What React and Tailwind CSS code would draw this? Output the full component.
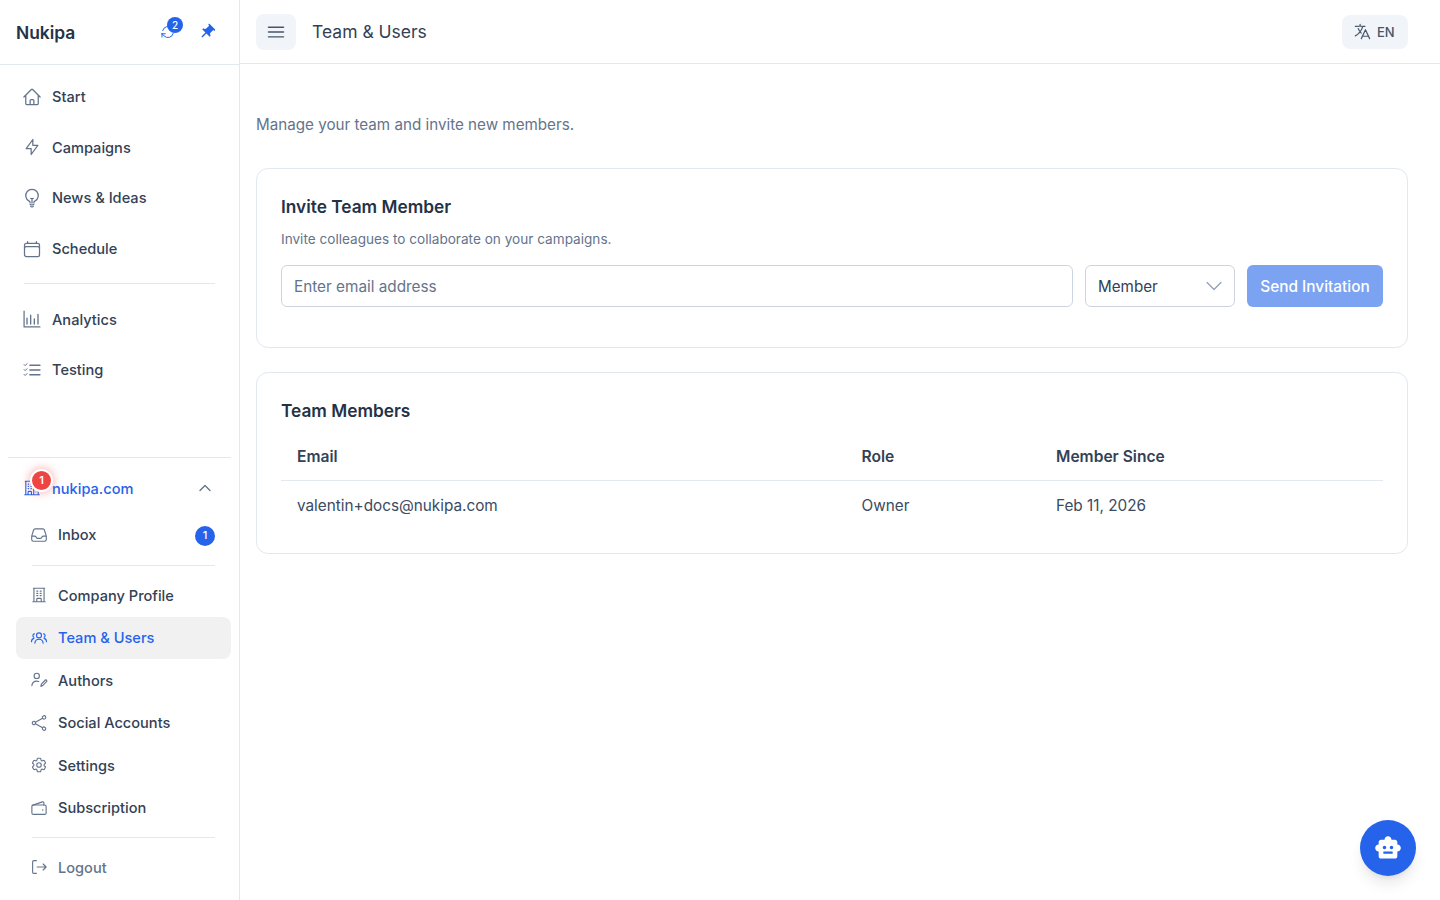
import React from "react";
import {
  HiOutlineHome, HiOutlineLightBulb, HiOutlineCalendar,
  HiOutlineBuildingOffice2, HiOutlineInbox, HiOutlineBuildingOffice,
  HiOutlineShare, HiOutlineCog6Tooth,
  HiOutlineLanguage, HiOutlineBars3, HiOutlineChevronUp, HiOutlineChevronDown,
  HiOutlineArrowPath,
} from "react-icons/hi2";
import { MdSmartToy, MdPushPin } from "react-icons/md";

const Stroke = ({ className, width = 1.5, children }) => (
  <svg viewBox="0 0 24 24" fill="none" stroke="currentColor" strokeWidth={width} strokeLinecap="round" strokeLinejoin="round" className={className}>
    {children}
  </svg>
);

const BoltIcon = ({ className }) => (
  <Stroke className={className}>
    <path d="M13 3v7h6l-8 11v-7H5l8-11z" />
  </Stroke>
);

const AnalyticsIcon = ({ className }) => (
  <Stroke className={className}>
    <path d="M2.500 2.500v19h19" />
    <path d="M6 11v7M10.400 7.500v10.500M14.800 12v6M19.200 6.600v11.400" strokeWidth="1.600" />
  </Stroke>
);

const TestingIcon = ({ className }) => (
  <Stroke className={className}>
    <path d="M9.500 6.400h12M9.500 12h12M9.500 17.600h12" strokeWidth="1.800" />
    <path d="M2.500 5.500l1.300 1.300 2.200-2.300M2.500 11.500l1.300 1.300 2.200-2.300M2.500 17.300l1.300 1.300 2.200-2.300" strokeWidth="1.200" />
  </Stroke>
);

const TeamIcon = ({ className }) => (
  <Stroke className={className}>
    <circle cx="12" cy="8.500" r="3.300" />
    <path d="M6.500 19c.2-3.400 2.500-5.300 5.500-5.300s5.300 1.900 5.500 5.300" />
    <path d="M6 6.500a2.300 2.300 0 0 0-.8 4.400M2 17c0-2.600 1.200-4 3.200-4.500" />
    <path d="M18 6.500a2.300 2.300 0 0 1 .8 4.400M22 17c0-2.600-1.200-4-3.200-4.500" />
  </Stroke>
);

const AuthorsIcon = ({ className }) => (
  <Stroke className={className}>
    <circle cx="9" cy="6.500" r="3.500" />
    <path d="M2.500 19.500c.5-4 3-6 6.500-6 1 0 1.900.2 2.700.5" />
    <path d="M14.500 20.500l.6-3 5.400-5.500c.8-.8 2.600 1 1.800 1.800l-5.400 5.600-2.400 1.100z" />
  </Stroke>
);

const WalletIcon = ({ className }) => (
  <Stroke className={className}>
    <rect x="2.500" y="8" width="19" height="12.500" rx="2" />
    <path d="M3 8.500L16.500 3.800c1-.3 2 .4 2 1.500V8" />
    <path d="M17 14.500h.01" strokeWidth="2" />
  </Stroke>
);

const LogoutIcon = ({ className }) => (
  <Stroke className={className}>
    <path d="M8.500 3.500H5a1.500 1.500 0 0 0-1.500 1.500v14A1.500 1.500 0 0 0 5 20.500h3.500" />
    <path d="M9.500 12h12M17.500 8l4 4-4 4" />
  </Stroke>
);

const MainNavItem = ({ icon: Icon, label }) => (
  <a className="flex h-[50.67px] items-center gap-[10px] pl-[6px] text-[14.6px] font-medium text-[#334155]">
    <Icon className="h-5 w-5 shrink-0 text-[#64748b]" />
    <span className="pt-0.5">{label}</span>
  </a>
);

const SubNavItem = ({ icon: Icon, label, active }) => (
  <a className={`flex h-[42.5px] items-center gap-[10px] rounded-lg pl-[14px] text-[14.6px] font-medium ${active ? "bg-[#f1f1f1] text-[#2563eb]" : "text-[#334155]"}`}>
    <Icon className={`h-[18px] w-[18px] shrink-0 ${active ? "text-[#2563eb]" : "text-[#64748b]"}`} />
    <span className="pt-[3px]">{label}</span>
  </a>
);

const Sidebar = () => (
  <aside className="flex h-screen w-[240px] shrink-0 flex-col border-r border-[#e2e8f0] bg-white">
    <div className="flex h-[65px] shrink-0 items-center justify-between border-b border-[#e2e8f0] pl-4 pr-[23px]">
      <span className="pt-[3px] text-[17.4px] font-semibold text-[#243247]">Nukipa</span>
      <div className="flex items-center gap-[22px]">
        <div className="relative">
          <HiOutlineArrowPath className="h-4 w-4 text-[#2563eb]" />
          <span className="absolute -right-[7px] -top-[7px] flex h-4 w-4 items-center justify-center rounded-full bg-[#2563eb] text-[10px] font-medium text-white">2</span>
        </div>
        <MdPushPin className="h-[18px] w-[18px] rotate-45 text-[#2563eb]" />
      </div>
    </div>

    <nav className="flex flex-1 flex-col pl-4 pr-6 pt-[6.5px]">
      <MainNavItem icon={HiOutlineHome} label="Start" />
      <MainNavItem icon={BoltIcon} label="Campaigns" />
      <MainNavItem icon={HiOutlineLightBulb} label="News & Ideas" />
      <MainNavItem icon={HiOutlineCalendar} label="Schedule" />
      <div className="mb-[10px] ml-2 mt-[9px] h-px bg-[#e2e8f0]" />
      <MainNavItem icon={AnalyticsIcon} label="Analytics" />
      <MainNavItem icon={TestingIcon} label="Testing" />
    </nav>

    <div className="mx-2 flex flex-col border-t border-[#e2e8f0] pb-3 pl-2">
      <div className="relative flex h-[60px] items-center justify-between pl-[7px] pr-[18px] text-[14.6px] font-medium text-[#2563eb]">
        <div className="flex items-center gap-[11px]">
          <HiOutlineBuildingOffice2 className="h-[18px] w-[18px]" />
          <span className="pt-[3px]">nukipa.com</span>
        </div>
        <HiOutlineChevronUp className="h-4 w-4 text-[#64748b]" strokeWidth={2} />
        <span className="absolute left-[14px] top-[11px] flex h-[23px] w-[23px] items-center justify-center rounded-full border-2 border-white bg-[#ef4444] text-[11px] font-semibold text-white shadow-[0_0_10px_rgba(239,68,68,0.5)]">1</span>
      </div>
      <a className="flex h-[35px] items-center justify-between pl-[14px] pr-4 text-[14.6px] font-medium text-[#334155]">
        <span className="flex items-center gap-[10px]">
          <HiOutlineInbox className="h-[18px] w-[18px] text-[#64748b]" />
          <span>Inbox</span>
        </span>
        <span className="flex h-5 w-5 items-center justify-center rounded-full bg-[#2563eb] text-[11px] font-medium text-white">1</span>
      </a>
      <div className="mx-4 mb-2 mt-3 h-px bg-[#e2e8f0]" />
      <SubNavItem icon={HiOutlineBuildingOffice} label="Company Profile" />
      <SubNavItem icon={TeamIcon} label="Team & Users" active />
      <SubNavItem icon={AuthorsIcon} label="Authors" />
      <SubNavItem icon={HiOutlineShare} label="Social Accounts" />
      <SubNavItem icon={HiOutlineCog6Tooth} label="Settings" />
      <SubNavItem icon={WalletIcon} label="Subscription" />
      <div className="mx-4 my-2 h-px bg-[#e2e8f0]" />
      <a className="flex h-[42px] items-center gap-[10px] pl-[14px] text-[14.6px] font-medium text-[#64748b]">
        <LogoutIcon className="h-[18px] w-[18px]" />
        <span className="pt-[3px]">Logout</span>
      </a>
    </div>
  </aside>
);

const Header = () => (
  <header className="flex h-[64px] shrink-0 items-center justify-between border-b border-[#e2e8f0] pl-4 pr-8">
    <div className="flex items-center gap-4">
      <button className="flex h-9 w-10 items-center justify-center rounded-lg bg-[#f1f5f9] text-[#475569]">
        <HiOutlineBars3 className="h-[22px] w-[22px]" />
      </button>
      <h1 className="pt-0.5 text-[17.5px] text-[#334155]">Team & Users</h1>
    </div>
    <button className="flex h-[34px] w-[66px] items-center gap-[5px] rounded-lg bg-[#f1f5f9] pl-[11px] text-[13px] font-medium text-[#475569]">
      <HiOutlineLanguage className="h-[19px] w-[19px]" />
      <span className="pt-[2px]">EN</span>
    </button>
  </header>
);

const InviteCard = () => (
  <section className="h-[180px] rounded-xl border border-[#e2e8f0] bg-white px-6 pt-6">
    <h2 className="text-[17.3px] font-semibold leading-7 text-[#243247]">Invite Team Member</h2>
    <p className="mt-2 text-[13.6px] leading-5 text-[#64748b]">Invite colleagues to collaborate on your campaigns.</p>
    <div className="mt-4 flex gap-3">
      <input
        placeholder="Enter email address"
        className="h-[42px] flex-1 rounded-md border border-[#cbd5e1] px-3 text-[15.3px] text-[#334155] placeholder:text-[#64748b]"
      />
      <div className="flex h-[42px] w-[150px] items-center justify-between rounded-md border border-[#cbd5e1] pl-3 pr-[9px] text-[15.2px] text-[#334155]">
        <span className="pt-0.5">Member</span>
        <HiOutlineChevronDown className="h-[22px] w-[22px] text-[#94a3b8]" />
      </div>
      <button className="h-[42px] w-[136px] rounded-md bg-[#7ca2f2] pt-0.5 text-[15.4px] font-medium text-white">Send Invitation</button>
    </div>
  </section>
);

const MembersCard = () => (
  <section className="mt-6 h-[182px] rounded-xl border border-[#e2e8f0] bg-white px-6 pt-6">
    <h2 className="text-[17.3px] font-semibold leading-7 text-[#243247]">Team Members</h2>
    <table className="mt-2 w-full text-left text-[15.3px] text-[#3b4a60]">
      <thead>
        <tr className="h-[47px] border-b border-[#e2e8f0] text-[15.6px]">
          <th className="w-[564.5px] px-4 font-semibold text-[#334155]">Email</th>
          <th className="w-[194.5px] px-4 font-semibold text-[#334155]">Role</th>
          <th className="px-4 font-semibold text-[#334155]">Member Since</th>
        </tr>
      </thead>
      <tbody>
        <tr className="h-[49px]">
          <td className="px-4 pt-[3px]">valentin+docs@nukipa.com</td>
          <td className="px-4 pt-[3px]">Owner</td>
          <td className="px-4 pt-[3px]">Feb 11, 2026</td>
        </tr>
      </tbody>
    </table>
  </section>
);

export default function App() {
  return (
    <div className="relative flex h-screen overflow-hidden bg-white font-['Inter',sans-serif]">
      <Sidebar />
      <div className="flex min-w-0 flex-1 flex-col">
        <Header />
        <main className="flex-1 pl-4 pr-8">
          <p className="mb-[31px] mt-[49px] text-[15.2px] leading-6 text-[#64748b]">Manage your team and invite new members.</p>
          <InviteCard />
          <MembersCard />
        </main>
      </div>
      <button className="absolute bottom-6 right-6 flex h-14 w-14 items-center justify-center rounded-full bg-[#2563eb] text-white shadow-lg">
        <MdSmartToy className="h-7 w-7" />
      </button>
    </div>
  );
}
